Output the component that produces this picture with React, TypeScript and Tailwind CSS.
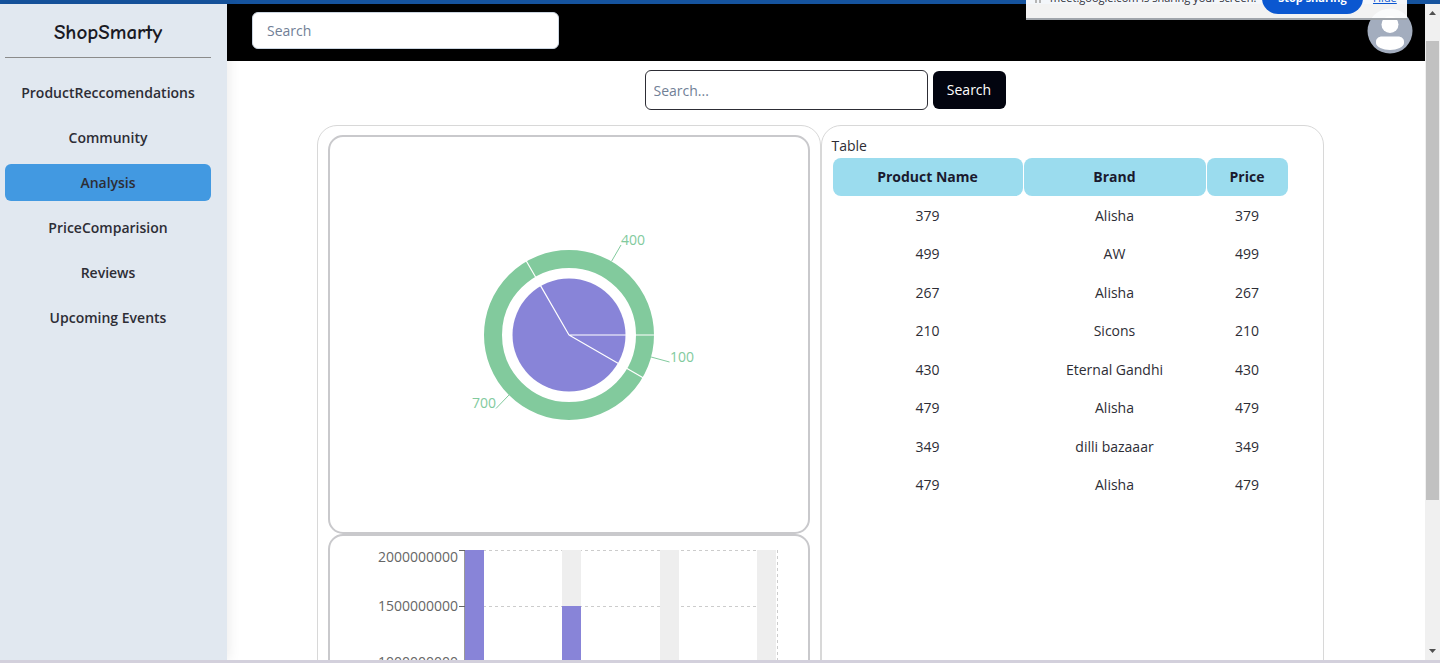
const menu = [
  "ProductReccomendations",
  "Community",
  "Analysis",
  "PriceComparision",
  "Reviews",
  "Upcoming Events",
];

const products = [
  { name: "379", brand: "Alisha", price: 379 },
  { name: "499", brand: "AW", price: 499 },
  { name: "267", brand: "Alisha", price: 267 },
  { name: "210", brand: "Sicons", price: 210 },
  { name: "430", brand: "Eternal Gandhi", price: 430 },
  { name: "479", brand: "Alisha", price: 479 },
  { name: "349", brand: "dilli bazaaar", price: 349 },
  { name: "479", brand: "Alisha", price: 479 },
];

const bars = [
  { x: 135, top: 14 },
  { x: 232, top: 70 },
  { x: 330, top: 238 },
  { x: 427, top: 238 },
];

const ticks = [
  { y: 14, labelY: 26, label: "2000000000" },
  { y: 70, labelY: 75, label: "1500000000" },
  { y: 126, labelY: 131, label: "1000000000" },
  { y: 182, labelY: 187, label: "500000000" },
  { y: 238, labelY: 243, label: "0" },
];

const Sidebar = () => {
  return (
    <aside className="w-[227px] shrink-0 bg-[#e1e8f0] pl-[5px] pr-4 shadow-[2px_0_12px_rgba(0,0,0,0.08)]">
      <h1 className="h-[53px] pt-3 text-center font-['Comic_Sans_MS','Comic_Neue',cursive] text-[21px] leading-8 font-bold text-[#1a1a24]">
        ShopSmarty
      </h1>
      <hr className="border-t border-[#8b8b8b]" />
      <nav className="mt-4 flex flex-col gap-2">
        {menu.map((item) => (
          <a
            key={item}
            href="#"
            className={
              item === "Analysis"
                ? "flex h-[37px] items-center justify-center rounded-md bg-[#4299e1] font-semibold"
                : "flex h-[37px] items-center justify-center rounded-md font-semibold"
            }
          >
            {item}
          </a>
        ))}
      </nav>
    </aside>
  );
};

const Header = () => {
  return (
    <header className="relative flex h-[57px] items-start justify-between bg-black pt-1 pr-3 pl-[25px]">
      <input
        type="text"
        placeholder="Search"
        aria-label="Search"
        className="mt-1 h-[37px] w-[307px] rounded-md border border-[#cbd5e0] bg-white px-[14px] placeholder:text-[#718096]"
      />
      <svg viewBox="0 0 46 46" className="size-[46px]">
        <circle cx="23" cy="23" r="22.5" fill="#a3adbe" />
        <circle cx="23" cy="16.5" r="8.5" fill="#fff" />
        <path
          d="M15 28.5h16c3.5 0 6 2.200 6 5v1.500c0 4-7 7-14 7s-14-3-14-7v-1.500c0-2.800 2.500-5 6-5z"
          fill="#fff"
        />
      </svg>
    </header>
  );
};

const PieCard = () => {
  return (
    <div className="flex h-[399px] items-center justify-center rounded-[15px] border-2 border-[#c9c9cc]">
      <svg viewBox="-130 -110 260 220" className="h-[220px] w-[260px]">
        <circle r="56.500" fill="#8884d8" />
        <circle r="76" fill="none" stroke="#82ca9d" strokeWidth="18" />
        <g stroke="#fff" strokeWidth="1.200">
          <path d="M0 0H57M0 0L-28.500 -49.400M0 0L49.400 28.500" />
          <path d="M66 0H86M-33 -57.200L-43 -74.500M57.200 33L74.500 43" />
        </g>
        <path
          d="M42.500 -73.600L52 -90M82.100 22L100.500 27M-60.100 60.100L-73 73.500"
          stroke="#82ca9d"
          fill="none"
        />
        <g fill="#82ca9d" fontSize="14">
          <text x="52" y="-90">400</text>
          <text x="101" y="27">100</text>
          <text x="-73" y="73" textAnchor="end">700</text>
        </g>
      </svg>
    </div>
  );
};

const BarCard = () => {
  return (
    <div className="h-[399px] rounded-[15px] border-2 border-[#c9c9cc]">
      <svg viewBox="0 0 478 300" className="h-[300px] w-[478px]">
        <g stroke="#ccc" strokeDasharray="3 3">
          {ticks.map((t) => (
            <line key={t.label} x1="135" x2="447" y1={t.y + 0.5} y2={t.y + 0.5} />
          ))}
          <line x1="447.500" x2="447.500" y1="14" y2="238" />
        </g>
        <line x1="134.500" x2="134.500" y1="14" y2="238" stroke="#999" />
        {ticks.map((t) => (
          <g key={t.label}>
            <line x1="129" x2="135" y1={t.y + 0.5} y2={t.y + 0.5} stroke="#666" />
            <text x="128" y={t.labelY} textAnchor="end" fontSize="14" fill="#666">
              {t.label}
            </text>
          </g>
        ))}
        {bars.map((b) => (
          <g key={b.x}>
            <rect x={b.x} y="14" width="19" height="224" fill="#eee" />
            <rect x={b.x} y={b.top} width="19" height={238 - b.top} fill="#8884d8" />
          </g>
        ))}
      </svg>
    </div>
  );
};

const ProductTable = () => {
  return (
    <>
      <p className="leading-[22px]">Table</p>
      <table className="h-[348px] w-[457px] table-fixed border-separate border-spacing-px text-center">
        <thead>
          <tr className="h-[38px] text-[#1a1a2e]">
            <th className="w-[190px] rounded-lg bg-[#9bdcee] font-bold">Product Name</th>
            <th className="w-[182px] rounded-lg bg-[#9bdcee] font-bold">Brand</th>
            <th className="rounded-lg bg-[#9bdcee] font-bold">Price</th>
          </tr>
        </thead>
        <tbody>
          {products.map((p, i) => (
            <tr key={i}>
              <td>{p.name}</td>
              <td>{p.brand}</td>
              <td>{p.price}</td>
            </tr>
          ))}
        </tbody>
      </table>
    </>
  );
};

const ShareBar = () => {
  return (
    <div className="absolute top-0 right-[33px] flex h-5 w-[381px] items-end overflow-hidden border-b-2 border-[#a0a5ab] bg-white/95 text-[11px]">
      <svg viewBox="0 0 8 4" className="mb-[14px] ml-2 h-1 w-2" fill="#b5b5b5">
        <rect x="1" width="2" height="3" />
        <rect x="5" width="2" height="3" />
      </svg>
      <span className="mb-[10px] ml-2 w-[212px] shrink-0 leading-5 whitespace-nowrap">
        meet.google.com is sharing your screen.
      </span>
      <button className="mb-1 h-8 w-[101px] shrink-0 rounded-full bg-[#0b57d0] leading-5 font-bold text-white">
        Stop sharing
      </button>
      <a href="#" className="mb-[10px] ml-[10px] leading-5 text-[#0b57d0] underline">
        Hide
      </a>
    </div>
  );
};

const ScrollBar = () => {
  return (
    <div className="flex w-[15px] shrink-0 flex-col items-center bg-[#f0f0f0]">
      <svg viewBox="0 0 15 37" className="h-[37px] w-[15px]">
        <path d="M4 11L7.500 7L11 11z" fill="#505050" />
      </svg>
      <div className="h-[70%] w-[13px] bg-[#c1c1c1]" />
      <svg viewBox="0 0 15 17" className="mt-auto h-[17px] w-[15px]">
        <path d="M4 6L7.500 10L11 6z" fill="#505050" />
      </svg>
    </div>
  );
};

export default function App() {
  return (
    <div className="relative flex h-screen flex-col overflow-hidden border-b-3 border-b-[#d3d0dc] bg-white font-['Open_Sans','Noto_Sans',sans-serif] text-sm leading-6 text-[#2d2d35]">
      <div className="h-1 shrink-0 bg-[#15539e]" />
      <div className="flex min-h-0 flex-1">
        <Sidebar />
        <main className="min-w-0 flex-1 overflow-hidden">
          <Header />
          <form className="flex items-center justify-center gap-[5px] pt-[9px] pr-0.5">
            <input
              type="text"
              placeholder="Search..."
              aria-label="Search products"
              className="h-10 w-[283px] rounded-md border border-[#2d2d35] px-2 placeholder:text-[#718096]"
            />
            <button type="button" className="h-[38px] w-[73px] rounded-md bg-[#02040f] text-white">
              Search
            </button>
          </form>
          <div className="flex pt-[15px] pr-[101px] pl-[90px]">
            <section className="min-w-0 flex-1 rounded-[20px] border border-[#d8d8d8] px-[10px] py-[9px]">
              <PieCard />
              <BarCard />
            </section>
            <section className="min-w-0 flex-1 rounded-[20px] border border-[#d8d8d8] px-[10px] py-[9px]">
              <ProductTable />
            </section>
          </div>
        </main>
        <ScrollBar />
      </div>
      <ShareBar />
    </div>
  );
}
